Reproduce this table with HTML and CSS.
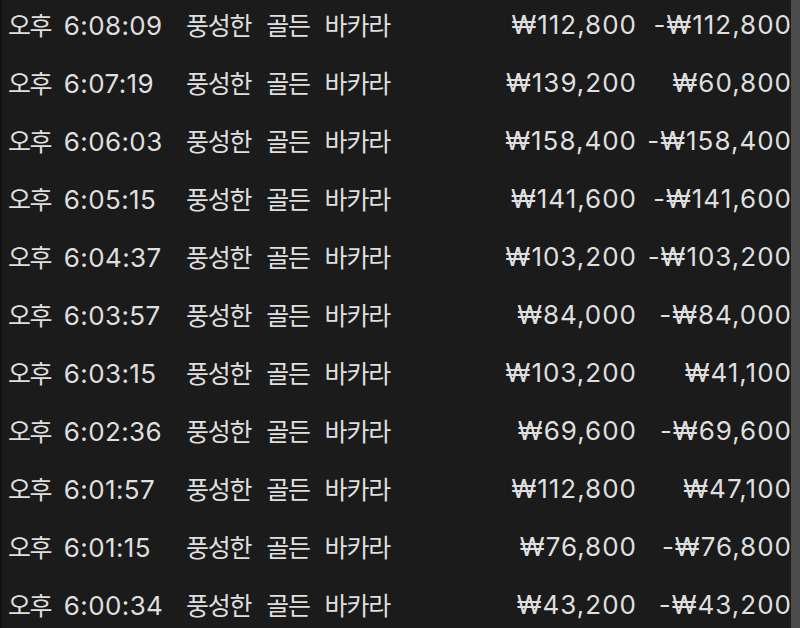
FILE: index.html
```html
<!DOCTYPE html>
<html lang="ko">
<head>
<meta charset="utf-8">
<link rel="stylesheet" href="styles.css">
</head>
<body>
<div class="frame">
  <div class="edge"></div>
  <div class="list">
    <div class="row"><span class="time"><span class="ko">오후</span> 6:08:09</span><span class="ko">풍성한 골든 바카라</span><span class="amt">₩112,800</span><span class="amt">-₩112,800</span></div>
    <div class="row"><span class="time"><span class="ko">오후</span> 6:07:19</span><span class="ko">풍성한 골든 바카라</span><span class="amt">₩139,200</span><span class="amt">₩60,800</span></div>
    <div class="row"><span class="time"><span class="ko">오후</span> 6:06:03</span><span class="ko">풍성한 골든 바카라</span><span class="amt">₩158,400</span><span class="amt">-₩158,400</span></div>
    <div class="row"><span class="time"><span class="ko">오후</span> 6:05:15</span><span class="ko">풍성한 골든 바카라</span><span class="amt">₩141,600</span><span class="amt">-₩141,600</span></div>
    <div class="row"><span class="time"><span class="ko">오후</span> 6:04:37</span><span class="ko">풍성한 골든 바카라</span><span class="amt">₩103,200</span><span class="amt">-₩103,200</span></div>
    <div class="row"><span class="time"><span class="ko">오후</span> 6:03:57</span><span class="ko">풍성한 골든 바카라</span><span class="amt">₩84,000</span><span class="amt">-₩84,000</span></div>
    <div class="row"><span class="time"><span class="ko">오후</span> 6:03:15</span><span class="ko">풍성한 골든 바카라</span><span class="amt">₩103,200</span><span class="amt">₩41,100</span></div>
    <div class="row"><span class="time"><span class="ko">오후</span> 6:02:36</span><span class="ko">풍성한 골든 바카라</span><span class="amt">₩69,600</span><span class="amt">-₩69,600</span></div>
    <div class="row"><span class="time"><span class="ko">오후</span> 6:01:57</span><span class="ko">풍성한 골든 바카라</span><span class="amt">₩112,800</span><span class="amt">₩47,100</span></div>
    <div class="row"><span class="time"><span class="ko">오후</span> 6:01:15</span><span class="ko">풍성한 골든 바카라</span><span class="amt">₩76,800</span><span class="amt">-₩76,800</span></div>
    <div class="row"><span class="time"><span class="ko">오후</span> 6:00:34</span><span class="ko">풍성한 골든 바카라</span><span class="amt">₩43,200</span><span class="amt">-₩43,200</span></div>
  </div>
  <div class="scrollbar"></div>
</div>
</body>
</html>
```
FILE: styles.css
```css
html, body {
  margin: 0;
  padding: 0;
  background: #1b1b1b;
}
body {
  width: 800px;
  height: 628px;
  overflow: hidden;
  font-family: "Inter", "Noto Sans CJK KR", sans-serif;
  color: #dfdfdf;
}
.frame {
  display: flex;
  height: 628px;
}
.edge {
  width: 2px;
  background: #111111;
  flex: none;
}
.list {
  flex: 1;
  margin-top: -5px;
  overflow: hidden;
}
.row {
  display: grid;
  grid-template-columns: 184px 290px 161px 154px;
  height: 58px;
  align-items: center;
  font-size: 26px;
  letter-spacing: 1px;
  white-space: nowrap;
}
.ko {
  font-family: "Noto Sans CJK KR", sans-serif;
  font-size: 25px;
  letter-spacing: -1.2px;
  word-spacing: 9px;
}
.time {
  padding-left: 6px;
  letter-spacing: 0.4px;
  word-spacing: 5px;
}
.time .ko {
  letter-spacing: -1.5px;
}
.amt {
  text-align: right;
}
.amt:last-child {
  margin-right: -1px;
}
.scrollbar {
  width: 9px;
  flex: none;
  background: #4c4c4c;
}
```
